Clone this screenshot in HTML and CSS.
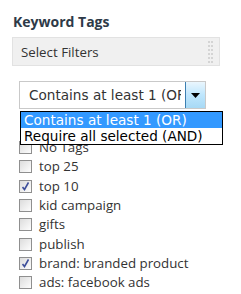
FILE: index.html
```html
<!DOCTYPE html>
<html>
<head>
<meta charset="utf-8">
<link rel="stylesheet" href="styles.css">
</head>
<body>
<div class="panel">
  <h3 class="title">Keyword Tags</h3>
  <div class="filters">
    <span>Select Filters</span>
    <svg class="grip" width="6" height="22" viewBox="0 0 6 22">
      <g fill="#d4d4d4">
        <rect x="0" y="0" width="2" height="2"/><rect x="3" y="0" width="2" height="2"/>
        <rect x="0" y="4" width="2" height="2"/><rect x="3" y="4" width="2" height="2"/>
        <rect x="0" y="8" width="2" height="2"/><rect x="3" y="8" width="2" height="2"/>
        <rect x="0" y="12" width="2" height="2"/><rect x="3" y="12" width="2" height="2"/>
        <rect x="0" y="16" width="2" height="2"/><rect x="3" y="16" width="2" height="2"/>
        <rect x="0" y="20" width="2" height="2"/><rect x="3" y="20" width="2" height="2"/>
      </g>
    </svg>
  </div>
  <div class="content">
    <div class="select">
      <span class="select-text">Contains at least 1 (OR)</span>
      <span class="select-btn">
        <svg width="9" height="5" viewBox="0 0 9 5"><path d="M0 0H9L4.5 5Z" fill="#000"/></svg>
      </span>
    </div>
    <ul class="tags">
      <li><span class="cb"></span>No Tags</li>
      <li><span class="cb"></span>top 25</li>
      <li><span class="cb checked"></span>top 10</li>
      <li><span class="cb"></span>kid campaign</li>
      <li><span class="cb"></span>gifts</li>
      <li><span class="cb"></span>publish</li>
      <li><span class="cb checked"></span>brand: branded product</li>
      <li><span class="cb"></span>ads: facebook ads</li>
    </ul>
    <div class="menu">
      <div class="opt active">Contains at least 1 (OR)</div>
      <div class="opt">Require all selected (AND)</div>
    </div>
  </div>
</div>
</body>
</html>
```
FILE: styles.css
```css
html, body {
  margin: 0;
  padding: 0;
  background: #fff;
}
.panel {
  width: 208px;
  padding: 13px 0 0 12px;
  font-family: "Open Sans", sans-serif;
  color: #333;
}
.title {
  margin: 0 0 7px 1px;
  font-size: 14px;
  line-height: 17px;
  font-weight: 700;
  color: #2e3a48;
}
.filters {
  height: 27px;
  border: 1px solid #e2e2e2;
  background: #f0f0f0;
  display: flex;
  align-items: center;
  justify-content: space-between;
  padding: 0 5px 0 8px;
  font-size: 13.3px;
  color: #333;
}
.grip { display: block; }
.content {
  position: relative;
  padding: 15px 0 0 7px;
}
.select {
  width: 187px;
  height: 28px;
  box-sizing: border-box;
  border: 1px solid #c9c9c9;
  display: flex;
  align-items: stretch;
  font-family: "DejaVu Sans", Verdana, sans-serif;
  font-size: 13.6px;
  color: #333;
  overflow: hidden;
}
.select-text {
  flex: 1;
  min-width: 0;
  padding-left: 9px;
  line-height: 26px;
  white-space: nowrap;
  overflow: hidden;
}
.select-btn {
  flex: none;
  width: 19px;
  margin: -1px -1px -1px 4px;
  border: 1px solid #3c7fb1;
  background: linear-gradient(#eaf6fd, #bee6fd 50%, #a7d9f5);
  display: flex;
  align-items: center;
  justify-content: center;
}
.menu {
  position: absolute;
  left: 8px;
  top: 45px;
  width: 201px;
  border: 1px solid #000;
  background: #fff;
  font-family: "DejaVu Sans", Verdana, sans-serif;
  font-size: 13.6px;
  color: #000;
}
.opt {
  height: 16px;
  line-height: 16px;
  padding-left: 3px;
  white-space: nowrap;
}
.opt.active {
  background: #3399ff;
  color: #fff;
}
.tags {
  list-style: none;
  margin: 29px 0 0 0;
  padding: 0;
  font-size: 13.3px;
}
.tags li {
  height: 19.33px;
  display: flex;
  align-items: center;
  line-height: 19px;
  color: #333;
}
.cb {
  width: 13px;
  height: 13px;
  box-sizing: border-box;
  border: 1px solid #8f8f8f;
  background: linear-gradient(135deg, #dcdcdc, #fdfdfd);
  margin-right: 7px;
  flex: none;
  position: relative;
}
.cb.checked::after {
  content: "";
  position: absolute;
  left: 2px;
  top: 1px;
  width: 7px;
  height: 9px;
  background: url("data:image/svg+xml,%3Csvg xmlns='http://www.w3.org/2000/svg' width='7' height='9' viewBox='0 0 7 9'%3E%3Cpath d='M0.5 5L2.5 7.5L6.5 0.5' fill='none' stroke='%233d4e9a' stroke-width='1.6'/%3E%3C/svg%3E") no-repeat;
}
```
